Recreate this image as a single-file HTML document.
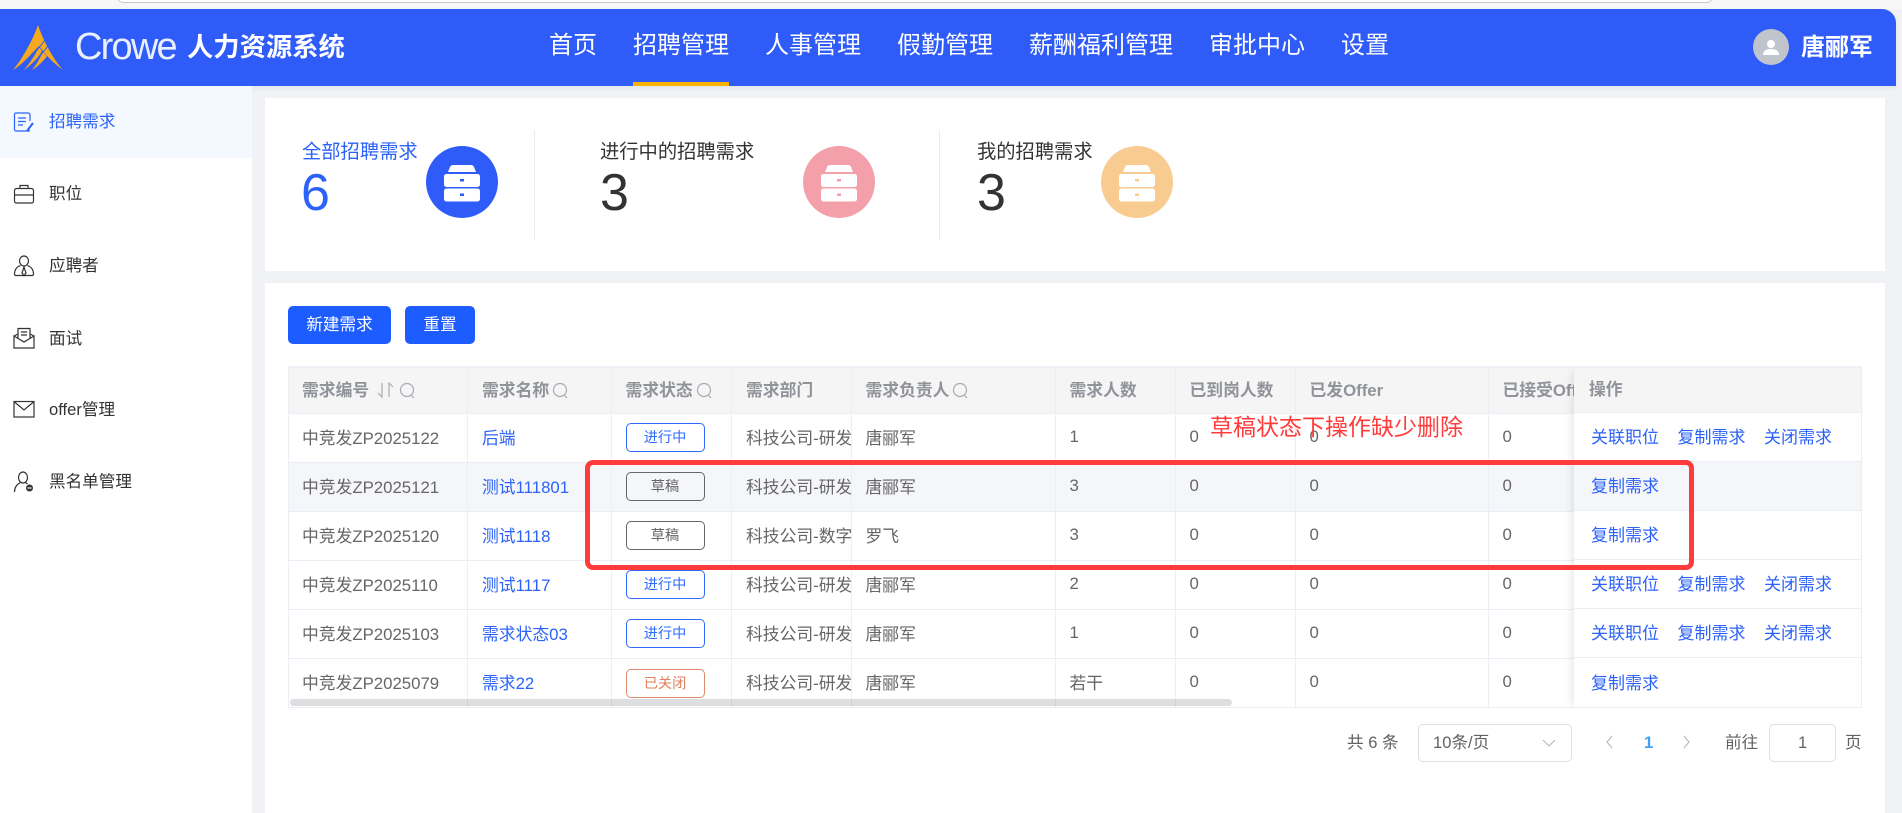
<!DOCTYPE html>
<html lang="zh-CN"><head><meta charset="utf-8"><title>招聘需求</title>
<style>
*{box-sizing:border-box}
html,body{margin:0;padding:0}
body{width:1902px;height:813px;overflow:hidden;position:relative;background:#f1f2f5;font-family:"Liberation Sans","Noto Sans CJK SC",sans-serif;color:#333}
.a{position:absolute;white-space:nowrap}
.top{left:0;top:0;width:1902px;height:9px;background:#f7f7f7}
.urlbar{left:117px;top:-10px;width:1596px;height:13px;background:#fff;border:1px solid #c9c9c9;border-radius:8px}
.hd{left:0;top:9px;width:1896px;height:77px;background:#2f5cf9;border-top-right-radius:14px;box-shadow:0 2px 6px rgba(0,0,0,.06)}
.nav{top:28px;font-size:24px;line-height:36px;color:#fff}
.side{left:0;top:86px;width:252px;height:727px;background:#fff}
.act{left:0;top:86px;width:252px;height:72px;background:#f4f8ff}
.mi{left:49px;font-size:16.6px;line-height:24px;color:#333}
.mi.on{color:#2b62f9}
.ic{position:absolute;left:13px;width:22px;height:22px;fill:none;stroke:#333;stroke-width:1.2}
.card{left:265px;width:1620px;background:#fff}
.lb{font-size:19.3px;line-height:28px;top:138.500px;color:#333}
.num{font-size:52px;line-height:60px;top:163px;color:#333}
.cir{position:absolute;top:146px;width:72px;height:72px}
.dv{top:130px;width:1px;height:110px;background:#ececec}
.btn{top:306px;height:38px;background:#1d5cff;border-radius:5px;color:#fff;font-size:16.6px;line-height:38px;text-align:center}
.tw{left:288px;top:366px;width:1574px;height:342px;overflow:hidden;border-top:2px solid #eef0f5;border-right:1px solid #ebeef5;border-left:1px solid #ebeef5}
table{border-collapse:collapse;table-layout:fixed;width:1574px;margin-left:-1px}
th,td{padding:0 0 2px 14px;overflow:hidden;white-space:nowrap;text-align:left;border-right:1px solid #ebeef5;border-bottom:1.5px solid #ebeef5;font-size:16.8px}
th{height:45px;background:#f5f5f6;color:#909399;font-weight:700}
td{height:49.1px;color:#666}
tr.g td{background:#f5f6fa}
td a{color:#2b62f9;text-decoration:none}
.tag{display:block;position:relative;top:1px;width:79px;height:29px;line-height:29px;border:1px solid #2f6bff;border-radius:5px;color:#2f6bff;text-align:center;font-size:14.2px}
.tag.d{border-color:#666;color:#666}
.tag.c{border-color:#e08a6c;color:#e0805e}
th svg{vertical-align:-3px;fill:none;stroke:#a8abb2;stroke-width:1.2}
.fix{position:absolute;left:1285px;top:0;width:288px;height:340px;background:#fff;box-shadow:-6px 0 8px -4px rgba(0,0,0,.1)}
.fix div{position:absolute;left:0;width:288px;border-bottom:1.5px solid #ebeef5;padding-left:17px;height:49.1px;line-height:49.500px;font-size:17px;white-space:nowrap}
.fix a{color:#2b62f9;margin-right:18.500px}
.sb{left:290px;top:699px;width:942px;height:7px;background:rgba(144,147,153,.3);border-radius:4px}
.pg{top:731px;font-size:16.6px;line-height:24px;color:#606266}
.box{top:724px;height:38px;background:#fff;border:1px solid #dcdfe6;border-radius:5px}
.red{left:585px;top:460px;width:1109px;height:110px;border:5.5px solid #ff3b3b;border-radius:8px}
.rt{left:1210px;top:412px;font-size:23px;line-height:30px;color:#ff3b3b}
</style></head><body>
<div class="a top"></div><div class="a urlbar"></div>
<div class="a hd"></div>

<svg class="a" style="left:12px;top:24px" width="53" height="47" viewBox="0 0 53 47"><path fill="#f4a91f" d="M26 1 C 31 16 41 35 51 46 C 41 39 33 30 27 22 C 20 29 10 41 1 46 C 10 35 20 18 26 1Z"/><path fill="#f4a91f" d="M27 23 C 22 33 17 40 12 46 C 20 41 27 33 30 27Z M31 28 C 27 36 24 41 20 46 C 27 42 32 36 35 32Z"/><path fill="none" stroke="#2f5cf9" stroke-width="1" d="M33 16 C 24 28 13 40 4 46 M36 22 C 28 32 19 42 12 47"/></svg>
<div class="a" style="left:75px;top:25px;font-size:38px;line-height:44px;color:#fff;letter-spacing:-1.800px;opacity:.9;font-weight:400">Crowe</div>
<div class="a" style="left:187px;top:29px;font-size:26.3px;line-height:36px;font-weight:700;color:#fff">人力资源系统</div>

<div class="a nav" style="left:549px">首页</div>
<div class="a nav" style="left:633px">招聘管理</div>
<div class="a nav" style="left:765px">人事管理</div>
<div class="a nav" style="left:897px">假勤管理</div>
<div class="a nav" style="left:1029px">薪酬福利管理</div>
<div class="a nav" style="left:1209px">审批中心</div>
<div class="a nav" style="left:1341px">设置</div>
<div class="a" style="left:633px;top:82px;width:96px;height:4px;background:#f9b200"></div>

<svg class="a" style="left:1753px;top:29px" width="36" height="36" viewBox="0 0 36 36"><circle cx="18" cy="18" r="18" fill="#c0c4cc"/><circle cx="18" cy="15" r="4" fill="#fff"/><path fill="#fff" d="M10 26c0-4 3-6 8-6s8 2 8 6z"/></svg>
<div class="a" style="left:1801px;top:30px;font-size:24px;line-height:36px;font-weight:700;color:#fff">唐郦军</div>

<div class="a side"></div><div class="a act"></div>
<svg class="ic" style="top:111px;stroke:#2b62f9" viewBox="0 0 22 22"><path d="M16 17v3H3a1.500 1.500 0 0 1-1.500-1.500V3.500A1.500 1.500 0 0 1 3 2h12a2 2 0 0 1 2 2v6"/><path d="M5 7h8M5 10.500h8M5 14h5"/><path stroke-width="2" d="M14 20l6-8"/></svg>
<div class="a mi on" style="top:110px">招聘需求</div>
<svg class="ic" style="top:183px" viewBox="0 0 22 22"><rect x="1.500" y="5.500" width="19" height="14.500" rx="2"/><path d="M7 5.500V2.500h8v3M1.500 12h19"/></svg>
<div class="a mi" style="top:182px">职位</div>
<svg class="ic" style="top:255px" viewBox="0 0 22 22"><ellipse cx="11" cy="6" rx="4.500" ry="5"/><path d="M7.500 10.500C3.500 12 1.500 15 1.500 19c0 1 .5 1.500 1.500 1.500h16c1 0 1.500-.5 1.500-1.500 0-4-2-7-6-8.500"/><path d="M11 12l-2 6 2 2.500 2-2.500z"/></svg>
<div class="a mi" style="top:254px">应聘者</div>
<svg class="ic" style="top:327px" viewBox="0 0 22 22"><path d="M1 9l4-2M21 9l-4-2M1 9v12h20V9l-10 6z"/><path d="M5 11V1.500h12V11"/><path d="M8 5h6M8 8h6"/></svg>
<div class="a mi" style="top:327px">面试</div>
<svg class="ic" style="top:398px" viewBox="0 0 22 22"><rect x="1" y="3.500" width="20" height="15.500"/><path d="M1.500 4l9.500 8 9.500-8"/></svg>
<div class="a mi" style="top:398px">offer管理</div>
<svg class="ic" style="top:471px" viewBox="0 0 22 22"><ellipse cx="10" cy="6.500" rx="4.500" ry="5.500"/><path d="M1.500 21c0-5 3-8 6-9.500M12.500 11.500l2 1.500"/><circle cx="16.500" cy="17" r="3.500" fill="#333" stroke="none"/><path stroke="#fff" d="M14.500 17h4"/></svg>
<div class="a mi" style="top:470px">黑名单管理</div>

<div class="a card" style="top:98px;height:173px"></div>
<div class="a card" style="top:283px;height:530px"></div>

<div class="a lb" style="left:302px;color:#2b62f9">全部招聘需求</div>
<div class="a num" style="left:301px;color:#2b62f9">6</div>
<svg class="cir" style="left:426px" viewBox="0 0 72 72"><circle cx="36" cy="36" r="36" fill="#2f5cf9"/><path fill="#fff" d="M27 19h18q2 0 3 2l2 5H22l2-5q1-2 3-2z"/><rect x="18" y="28" width="36" height="13" rx="2.500" fill="#fff"/><rect x="18" y="42.500" width="36" height="13" rx="2.500" fill="#fff"/><rect x="34" y="33" width="4" height="2.500" fill="#2f5cf9"/><rect x="34" y="47.500" width="4" height="2.500" fill="#2f5cf9"/></svg>
<div class="a dv" style="left:534px"></div>

<div class="a lb" style="left:600px">进行中的招聘需求</div>
<div class="a num" style="left:600px">3</div>
<svg class="cir" style="left:803px" viewBox="0 0 72 72"><circle cx="36" cy="36" r="36" fill="#f4a0ab"/><path fill="#fff" d="M27 19h18q2 0 3 2l2 5H22l2-5q1-2 3-2z"/><rect x="18" y="28" width="36" height="13" rx="2.500" fill="#fff"/><rect x="18" y="42.500" width="36" height="13" rx="2.500" fill="#fff"/><rect x="34" y="33" width="4" height="2.500" fill="#f4a0ab"/><rect x="34" y="47.500" width="4" height="2.500" fill="#f4a0ab"/></svg>
<div class="a dv" style="left:939px"></div>

<div class="a lb" style="left:977px">我的招聘需求</div>
<div class="a num" style="left:977px">3</div>
<svg class="cir" style="left:1101px" viewBox="0 0 72 72"><circle cx="36" cy="36" r="36" fill="#f8cc90"/><path fill="#fff" d="M27 19h18q2 0 3 2l2 5H22l2-5q1-2 3-2z"/><rect x="18" y="28" width="36" height="13" rx="2.500" fill="#fff"/><rect x="18" y="42.500" width="36" height="13" rx="2.500" fill="#fff"/><rect x="34" y="33" width="4" height="2.500" fill="#f8cc90"/><rect x="34" y="47.500" width="4" height="2.500" fill="#f8cc90"/></svg>

<div class="a btn" style="left:288px;width:103px">新建需求</div>
<div class="a btn" style="left:405px;width:70px">重置</div>

<div class="a tw">
<table>
<colgroup><col style="width:179.500px"><col style="width:143.500px"><col style="width:120.500px"><col style="width:119.500px"><col style="width:204px"><col style="width:120px"><col style="width:120px"><col style="width:193px"><col style="width:86px"><col style="width:288px"></colgroup>
<tr>
<th>需求编号 <svg width="42" height="17" viewBox="0 0 42 17" style="margin-left:2px"><path d="M6 1v14l-4-4M13 15V1l4 4"/><circle cx="31" cy="8" r="6.500"/><path d="M35 13l3 3"/></svg></th>
<th>需求名称<svg width="17" height="17" viewBox="0 0 17 17" style="margin-left:3px"><circle cx="8" cy="8" r="6.500"/><path d="M12 13l3 3"/></svg></th>
<th>需求状态<svg width="17" height="17" viewBox="0 0 17 17" style="margin-left:3px"><circle cx="8" cy="8" r="6.500"/><path d="M12 13l3 3"/></svg></th>
<th>需求部门</th>
<th>需求负责人<svg width="17" height="17" viewBox="0 0 17 17" style="margin-left:3px"><circle cx="8" cy="8" r="6.500"/><path d="M12 13l3 3"/></svg></th>
<th>需求人数</th><th>已到岗人数</th><th>已发Offer</th><th>已接受Offer</th><th></th>
</tr>
<tr><td>中竞发ZP2025122</td><td><a>后端</a></td><td><span class="tag">进行中</span></td><td>科技公司-研发</td><td>唐郦军</td><td>1</td><td>0</td><td>0</td><td>0</td><td></td></tr>
<tr class="g"><td>中竞发ZP2025121</td><td><a>测试111801</a></td><td><span class="tag d">草稿</span></td><td>科技公司-研发</td><td>唐郦军</td><td>3</td><td>0</td><td>0</td><td>0</td><td></td></tr>
<tr><td>中竞发ZP2025120</td><td><a>测试1118</a></td><td><span class="tag d">草稿</span></td><td>科技公司-数字</td><td>罗飞</td><td>3</td><td>0</td><td>0</td><td>0</td><td></td></tr>
<tr><td>中竞发ZP2025110</td><td><a>测试1117</a></td><td><span class="tag">进行中</span></td><td>科技公司-研发</td><td>唐郦军</td><td>2</td><td>0</td><td>0</td><td>0</td><td></td></tr>
<tr><td>中竞发ZP2025103</td><td><a>需求状态03</a></td><td><span class="tag">进行中</span></td><td>科技公司-研发</td><td>唐郦军</td><td>1</td><td>0</td><td>0</td><td>0</td><td></td></tr>
<tr><td>中竞发ZP2025079</td><td><a>需求22</a></td><td><span class="tag c">已关闭</span></td><td>科技公司-研发</td><td>唐郦军</td><td>若干</td><td>0</td><td>0</td><td>0</td><td></td></tr>
</table>
<div class="fix">
<div style="top:0;height:45px;background:#f5f5f6;color:#909399;font-weight:700;line-height:44px;padding-left:15px;font-size:16.8px">操作</div>
<div style="top:45px"><a>关联职位</a><a>复制需求</a><a>关闭需求</a></div>
<div style="top:94.100px;background:#f5f6fa"><a>复制需求</a></div>
<div style="top:143.200px"><a>复制需求</a></div>
<div style="top:192.300px"><a>关联职位</a><a>复制需求</a><a>关闭需求</a></div>
<div style="top:241.400px"><a>关联职位</a><a>复制需求</a><a>关闭需求</a></div>
<div style="top:290.500px"><a>复制需求</a></div>
</div>
</div>
<div class="a sb"></div>

<div class="a pg" style="left:1347px">共 6 条</div>
<div class="a box" style="left:1418px;width:154px"></div>
<div class="a pg" style="left:1433px">10条/页</div>
<svg class="a" style="left:1541px;top:738px" width="16" height="10" viewBox="0 0 16 10"><path d="M2 2l6 6 6-6" fill="none" stroke="#b4b7bd" stroke-width="1.100"/></svg>
<svg class="a" style="left:1605px;top:735px" width="8" height="14" viewBox="0 0 8 14"><path d="M7 1L2 7l5 6" fill="none" stroke="#b4b7bd" stroke-width="1.100"/></svg>
<div class="a pg" style="left:1644px;color:#409eff;font-weight:700">1</div>
<svg class="a" style="left:1683px;top:735px" width="8" height="14" viewBox="0 0 8 14"><path d="M1 1l5 6-5 6" fill="none" stroke="#b4b7bd" stroke-width="1.100"/></svg>
<div class="a pg" style="left:1725px">前往</div>
<div class="a box" style="left:1769px;width:67px"></div>
<div class="a pg" style="left:1798px">1</div>
<div class="a pg" style="left:1845px">页</div>

<div class="a red"></div>
<div class="a rt">草稿状态下操作缺少删除</div>
</body></html>
